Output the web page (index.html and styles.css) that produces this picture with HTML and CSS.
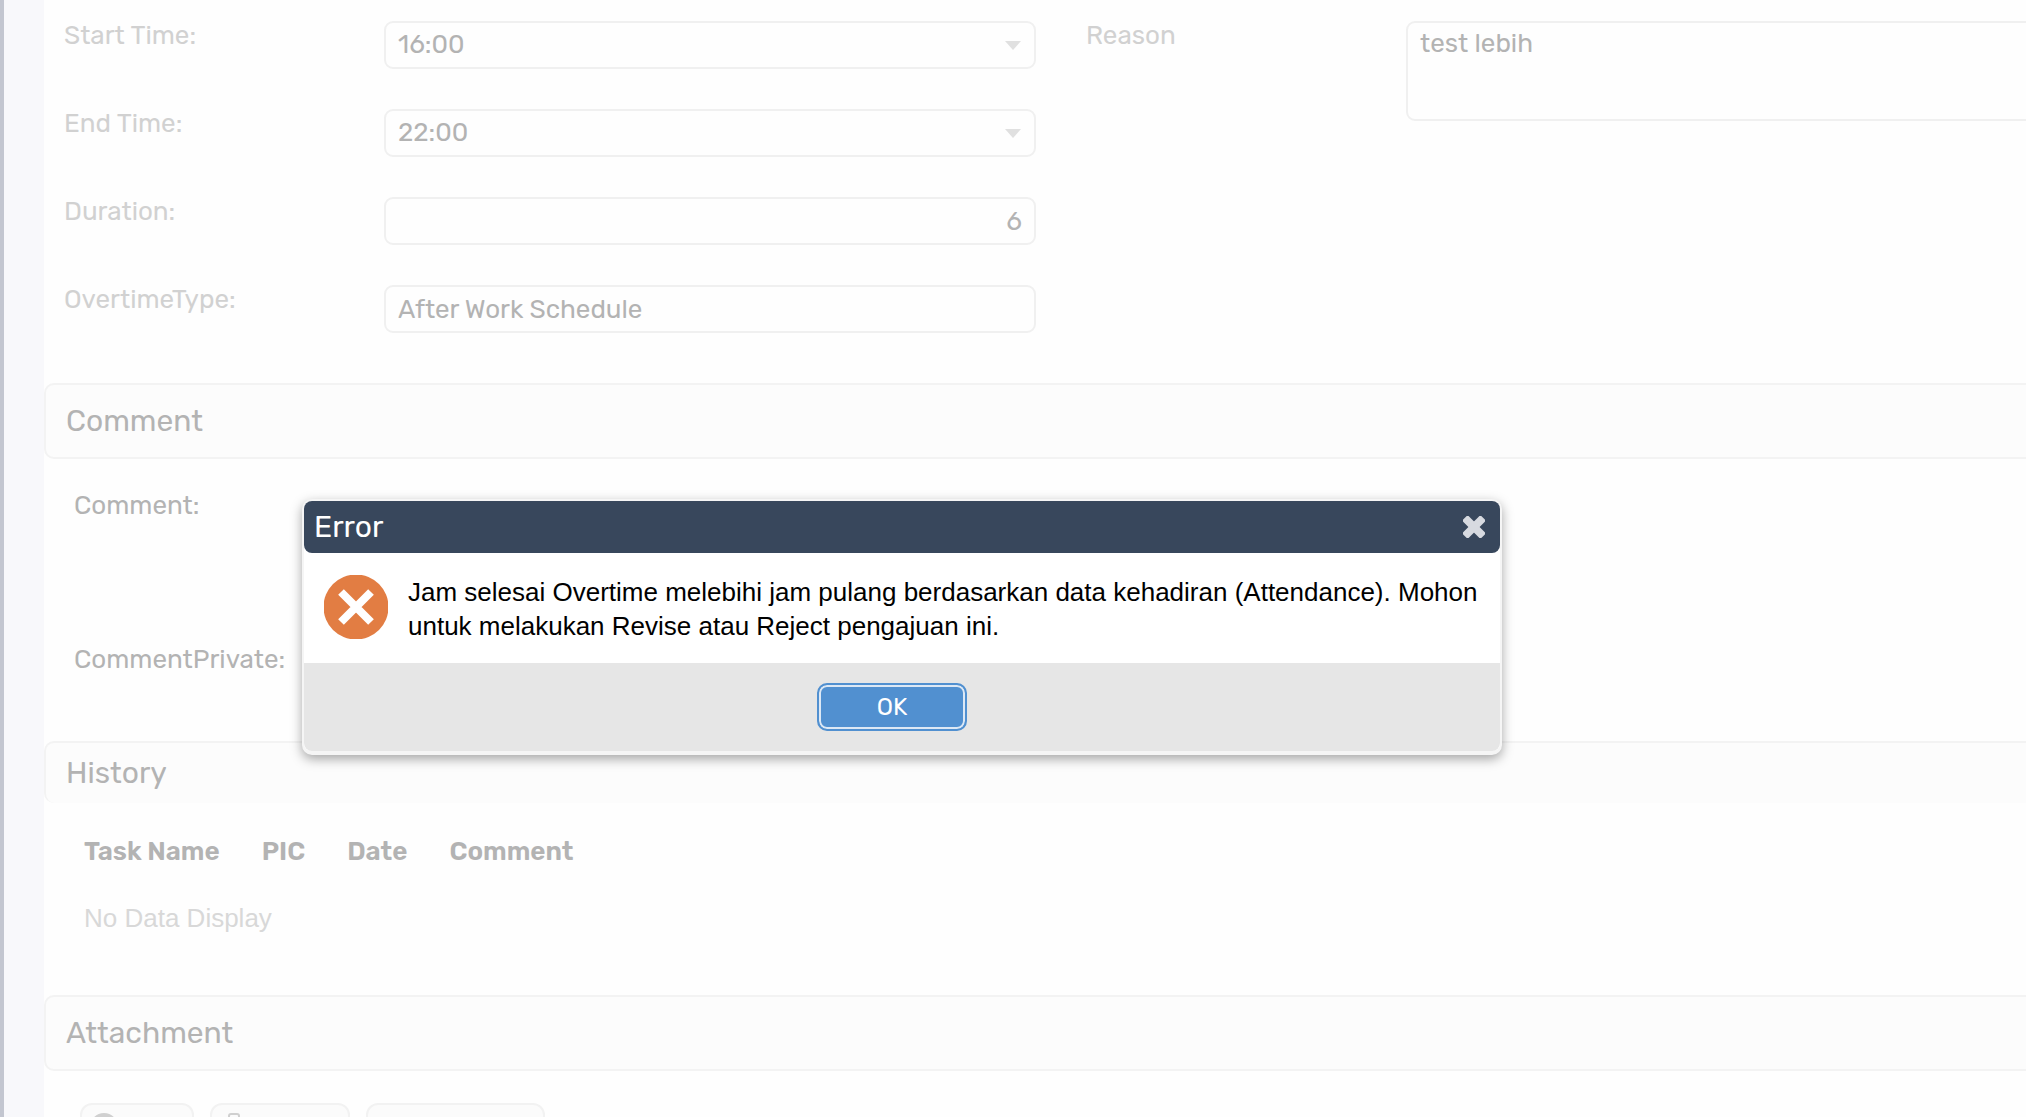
FILE: index.html
```html
<!DOCTYPE html>
<html lang="en">
<head>
    <meta charset="UTF-8">
    <meta name="viewport" content="width=device-width, initial-scale=1.0">
    <title>Overtime Request</title>
    <link rel="stylesheet" href="styles.css">
</head>
<body>
    <main class="page">
        <form class="fields">
            <div class="col">
                <div class="field">
                    <label for="start">Start Time:</label>
                    <div class="select">
                        <select id="start"><option>16:00</option></select>
                    </div>
                </div>
                <div class="field">
                    <label for="end">End Time:</label>
                    <div class="select">
                        <select id="end"><option>22:00</option></select>
                    </div>
                </div>
                <div class="field">
                    <label for="duration">Duration:</label>
                    <input type="text" id="duration" class="number" value="6">
                </div>
                <div class="field">
                    <label for="type">OvertimeType:</label>
                    <input type="text" id="type" value="After Work Schedule">
                </div>
            </div>
            <div class="col">
                <div class="field">
                    <label for="reason">Reason</label>
                    <textarea id="reason">test lebih</textarea>
                </div>
            </div>
        </form>

        <h2 class="panel-title">Comment</h2>
        <div class="comments">
            <p>Comment:</p>
            <p>CommentPrivate:</p>
        </div>

        <h2 class="panel-title open">History</h2>
        <div class="history">
            <table>
                <thead>
                    <tr><th>Task Name</th><th>PIC</th><th>Date</th><th>Comment</th></tr>
                </thead>
                <tbody>
                    <tr><td colspan="4">No Data Display</td></tr>
                </tbody>
            </table>
        </div>

        <h2 class="panel-title">Attachment</h2>
        <div class="toolbar">
            <button class="tool new" aria-label="New">
                <svg width="28" height="28" viewBox="0 0 28 28"><circle cx="14" cy="14" r="14" fill="#d0d0d0"/></svg>
            </button>
            <button class="tool delete" aria-label="Delete">
                <svg width="28" height="28" viewBox="0 0 28 28" fill="none" stroke="#d0d0d0" stroke-width="2"><path d="M9 6V3Q9 1 11 1H17Q19 1 19 3V6M3 6H25M6 6V27H22V6"/></svg>
            </button>
            <button class="tool download" aria-label="Download"></button>
        </div>
    </main>

    <!-- error popup -->
    <div class="dialog" role="dialog" aria-labelledby="dialog-title">
        <div class="dialog-head">
            <h1 id="dialog-title">Error</h1>
            <button class="close" aria-label="Close">
                <svg width="22" height="22" viewBox="0 0 22 22" fill="#d7dae0">
                    <rect x="-2" y="7" width="26" height="8" rx="2" transform="rotate(45 11 11)"/>
                    <rect x="-2" y="7" width="26" height="8" rx="2" transform="rotate(-45 11 11)"/>
                </svg>
            </button>
        </div>
        <div class="dialog-body">
            <svg class="error-icon" width="64" height="64" viewBox="0 0 64 64">
                <circle cx="32" cy="32" r="32.5" fill="#e27d43"/>
                <path d="M17 17L47 47M47 17L17 47" stroke="#fff" stroke-width="8"/>
            </svg>
            <p>Jam selesai Overtime melebihi jam pulang berdasarkan data kehadiran (Attendance). Mohon untuk melakukan Revise atau Reject pengajuan ini.</p>
        </div>
        <div class="dialog-foot">
            <button class="ok">OK</button>
        </div>
    </div>
</body>
</html>
```

FILE: styles.css
```css
*{box-sizing: border-box;}
body{
    margin: 0;
    height: 100vh;
    overflow: hidden;
    background-color: #f8f8fb;
    border-left: 4px solid #c3c6d0;
    padding-left: 40px;
    font-family: Rubik, Roboto, sans-serif;
    font-size: 26px;
    line-height: 32px;
    color: #b3b3b3;
}
h1, h2, p{margin: 0; font-weight: 400;}
button, input, select, textarea{font: inherit; color: inherit;}

/* the form is a little wider than the window */
.page{
    margin-right: -52px;
    min-height: 100%;
    background-color: #fefefe;
}
.fields{
    display: grid;
    grid-template-columns: 1fr 1fr;
    gap: 50px;
    padding: 21px 20px 50px;
}
.col{
    display: flex;
    flex-direction: column;
    gap: 40px;
}
.field{
    display: grid;
    grid-template-columns: 320px 1fr;
    align-items: start;
}
.field label{color: #d1d1d1; line-height: 30px;}
.field input, .field select, .field textarea{
    display: block;
    width: 100%;
    height: 48px;
    padding: 0 12px;
    border: 2px solid #f0f0f0;
    border-radius: 9px;
    background-color: #fefefe;
    outline: none;
    appearance: none;
}
.field textarea{
    height: 100px;
    padding: 5px 12px;
    resize: none;
}
.field .number{text-align: right;}
.select{position: relative;}
.select::after{
    content: "";
    position: absolute;
    right: 15px;
    top: 20px;
    border: 8px solid transparent;
    border-top: 9px solid #e0e0e0;
    border-bottom: 0;
}

.panel-title{
    height: 76px;
    padding: 0 20px;
    border: 2px solid #f3f3f3;
    border-radius: 10px;
    background-color: #fcfcfc;
    font-size: 30px;
    line-height: 72px;
}
.panel-title.open{
    height: 62px;
    border-bottom: 0;
    line-height: 60px;
}
.comments{
    display: flex;
    flex-direction: column;
    gap: 122px;
    padding: 31px 30px 65px;
}
.history{padding: 16px 20px 44px;}
.history table{border-collapse: collapse;}
.history th, .history td{
    height: 66px;
    padding: 0 22px 0 20px;
    text-align: left;
    font-weight: 600;
}
.history td{
    font-family: "Liberation Sans", Arial, sans-serif;
    font-weight: 400;
    color: #d8d8d8;
}
.toolbar{
    display: flex;
    gap: 16px;
    padding: 32px 36px;
}
.tool{
    height: 48px;
    padding: 8px 8px;
    border: 2px solid #f2f2f2;
    border-radius: 12px;
    background-color: #fbfbfb;
    text-align: left;
}
.tool svg{display: block;}
.new{width: 114px;}
.delete{width: 140px;}
.download{width: 179px;}

.dialog{
    position: absolute;
    top: 499px;
    left: 302px;
    width: 1200px;
    border: 2px solid #f5f5f5;
    border-bottom-width: 4px;
    border-radius: 10px;
    background-color: #fff;
    box-shadow: 0 4px 12px rgba(0, 0, 0, 0.35);
}
.dialog-head{
    display: flex;
    align-items: center;
    justify-content: space-between;
    height: 52px;
    padding: 0 15px 0 10px;
    border-radius: 8px;
    background-color: #38475c;
    color: #fff;
}
.dialog-head h1{font-size: 30px;}
.close{
    padding: 0;
    border: 0;
    background: none;
}
.close svg{display: block;}
.dialog-body{
    display: flex;
    gap: 20px;
    height: 110px;
    padding: 22px 20px;
    color: #000;
}
.dialog-body p{
    font-family: "Liberation Sans", Arial, sans-serif;
    line-height: 34px;
}
.error-icon{flex: none;}
.dialog-foot{
    display: flex;
    justify-content: center;
    align-items: center;
    height: 88px;
    padding-right: 20px;
    border-radius: 0 0 8px 8px;
    background-color: #e6e6e6;
}
.ok{
    width: 150px;
    height: 48px;
    padding: 0;
    border: 2px solid #5190d0;
    border-radius: 10px;
    background-color: #5190d0;
    box-shadow: inset 0 0 0 2px #dce8f5;
    font-size: 24px;
    color: #fff;
}
```
